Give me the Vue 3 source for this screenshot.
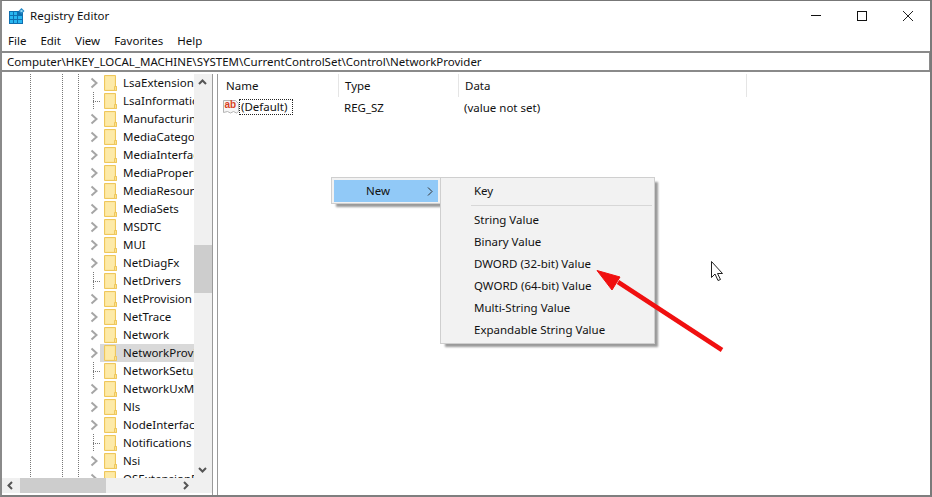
<script setup>
const items = [
  ['LsaExtensionConfig', 1], ['LsaInformation', 0], ['Manufacturing', 1], ['MediaCategories', 1],
  ['MediaInterfaces', 1], ['MediaProperties', 1], ['MediaResources', 1], ['MediaSets', 1],
  ['MSDTC', 1], ['MUI', 1], ['NetDiagFx', 1], ['NetDrivers', 0], ['NetProvision', 1],
  ['NetTrace', 1], ['Network', 1], ['NetworkProvider', 1], ['NetworkSetup', 0],
  ['NetworkUxManager', 1], ['Nls', 1], ['NodeInterfaces', 1], ['Notifications', 0],
  ['Nsi', 1], ['OSExtensionDatabase', 1]
]
const menuItems = ['File', 'Edit', 'View', 'Favorites', 'Help']
const groupTwo = ['String Value', 'Binary Value', 'DWORD (32-bit) Value', 'QWORD (64-bit) Value', 'Multi-String Value', 'Expandable String Value']
</script>

<template>
  <div class="window">
    <header class="titlebar">
      <svg class="appicon" width="16" height="16" viewBox="0 0 16 16">
        <rect x="0" y="3" width="14" height="13" fill="#0f6fb0" />
        <g fill="#29b6f0">
          <rect x="1" y="4" width="3" height="3" /><rect x="5" y="4" width="3" height="3" />
          <rect x="1" y="8" width="3" height="3" /><rect x="5" y="8" width="3" height="3" /><rect x="9" y="8" width="4" height="3" />
          <rect x="1" y="12" width="3" height="3" /><rect x="5" y="12" width="3" height="3" /><rect x="9" y="12" width="4" height="3" />
        </g>
        <path d="M12.500 0l3 3-3 3-3-3z" fill="#2a8cc8" />
        <rect x="11.500" y="2" width="2" height="2" fill="#8fd6f5" />
      </svg>
      <span class="title">Registry Editor</span>
      <div class="winbtns">
        <svg width="12" height="12" viewBox="0 0 12 12"><path d="M1 5.500h10" stroke="#111" fill="none" /></svg>
        <svg width="12" height="12" viewBox="0 0 12 12"><rect x="1.500" y="1.500" width="9" height="9" stroke="#111" fill="none" /></svg>
        <svg width="12" height="12" viewBox="0 0 12 12"><path d="M1 1l10 10M11 1L1 11" stroke="#222" fill="none" /></svg>
      </div>
    </header>
    <nav class="menubar">
      <span v-for="m in menuItems" :key="m">{{ m }}</span>
    </nav>
    <div class="address">Computer\HKEY_LOCAL_MACHINE\SYSTEM\CurrentControlSet\Control\NetworkProvider</div>
    <main class="body">
      <section class="treepane">
        <div class="treetop">
          <div class="tree">
            <div v-for="(it, i) in items" :key="it[0]" class="row" :class="{ sel: it[0] === 'NetworkProvider' }">
              <span class="exp">
                <svg v-if="it[1]" width="9" height="12" viewBox="0 0 9 12"><path d="M1.500 1.500L6.500 6l-5 4.500" fill="none" stroke="#a6a6a6" stroke-width="2" /></svg>
                <span v-else class="leaf"></span>
              </span>
              <svg class="folder" width="13" height="16" viewBox="0 0 13 16">
                <path d="M.5.5h11v11h1v4H.5z" fill="#fde28f" stroke="#eec75c" />
                <path d="M1.500 1.500h9v13h-9z" fill="#fdeaa8" />
                <path d="M10.500 11.500h2v4h-2z" fill="#fde28f" stroke="#eec75c" />
              </svg>
              <span class="name">{{ it[0] }}</span>
            </div>
          </div>
          <div class="vscroll">
            <svg width="18" height="16" viewBox="0 0 18 16"><path d="M5 10l3.500-3.500L12 10" fill="none" stroke="#555" stroke-width="2" /></svg>
            <div class="vtrack"><div class="vthumb"></div></div>
            <svg width="18" height="16" viewBox="0 0 18 16"><path d="M5 6l3.500 3.500L12 6" fill="none" stroke="#555" stroke-width="2" /></svg>
          </div>
        </div>
        <div class="hscroll">
          <svg width="17" height="15" viewBox="0 0 17 15"><path d="M10 4L6.500 7.500 10 11" fill="none" stroke="#555" stroke-width="2" /></svg>
          <div class="hthumb"></div>
          <svg class="hright" width="17" height="15" viewBox="0 0 17 15"><path d="M7 4l3.500 3.500L7 11" fill="none" stroke="#555" stroke-width="2" /></svg>
        </div>
      </section>
      <section class="list">
        <div class="lhead">
          <span class="c1">Name</span><span class="c2">Type</span><span class="c3">Data</span>
        </div>
        <div class="lrow">
          <svg class="regicon" width="16" height="16" viewBox="0 0 16 16">
            <path d="M.5 1.500h12l3 3v8l-2 1.500-3-1.500-3 1.500-3-1.500-4 1z" fill="#f6f6f6" stroke="#b5b5b5" />
            <text x="1.500" y="9" class="ab">ab</text>
          </svg>
          <span class="default">(Default)</span>
          <span class="t2">REG_SZ</span>
          <span class="t3">(value not set)</span>
        </div>
      </section>
    </main>

    <div class="ctx">
      <div class="ctxitem"><span class="newlabel">New</span><svg width="6" height="9" viewBox="0 0 6 9"><path d="M1 .5l4 4-4 4" fill="none" stroke="#333" /></svg></div>
    </div>
    <div class="sub">
      <div class="subitem">Key</div>
      <div class="sep"></div>
      <div v-for="g in groupTwo" :key="g" class="subitem">{{ g }}</div>
    </div>

    <svg class="arrow" width="932" height="497" viewBox="0 0 932 497">
      <path d="M722 350L618 282" stroke="#f01010" stroke-width="4.500" fill="none" />
      <path d="M597 270.500L620 277 612 290z" fill="#f01010" stroke="#f01010" />
      <path d="M711.500 261.500v16l3.500-3.500 3 6.500 2.500-1-3-6h5z" fill="#fff" stroke="#222" />
    </svg>
  </div>
</template>

<style scoped>
.window {
  position: relative;
  width: 932px;
  height: 497px;
  box-sizing: border-box;
  background: #fff;
  border-left: 2px solid #8a8a8a;
  border-right: 2px solid #7a7a7a;
  border-top: 1px solid #777;
  border-bottom: 2px solid #7f7f7f;
  font-family: "Noto Sans", "Open Sans", sans-serif;
  font-size: 11.5px;
  color: #111;
  overflow: hidden;
  display: flex;
  flex-direction: column;
}
.window::before {
  content: "";
  position: absolute;
  top: -1px;
  left: 859px;
  right: -2px;
  height: 1px;
  background: #1f3d35;
}
.titlebar {
  height: 30px;
  display: flex;
  align-items: center;
  padding-left: 7px;
  flex: none;
}
.appicon { margin-right: 5px; }
.title { padding-bottom: 2px; }
.winbtns {
  margin-left: auto;
  display: flex;
  gap: 34px;
  padding-right: 16px;
}
.menubar {
  height: 20px;
  display: flex;
  align-items: center;
  gap: 14px;
  padding-left: 6px;
  padding-bottom: 2px;
  box-sizing: border-box;
  flex: none;
}
.address {
  height: 21px;
  box-sizing: border-box;
  border: 1px solid #8a8a8a;
  border-width: 2px 1px 2px 0;
  line-height: 17px;
  padding-left: 5px;
  flex: none;
  white-space: nowrap;
}
.body {
  flex: 1;
  display: flex;
  min-height: 0;
  padding-top: 2px;
}
.treepane {
  width: 210px;
  flex: none;
  display: flex;
  flex-direction: column;
  border-right: 1px solid #9a9a9a;
}
.treetop {
  flex: 1;
  display: flex;
  min-height: 0;
}
.tree {
  width: 192px;
  flex: none;
  overflow: hidden;
  background-image:
    linear-gradient(#777 50%, transparent 50%),
    linear-gradient(#777 50%, transparent 50%),
    linear-gradient(#777 50%, transparent 50%);
  background-size: 1px 2px;
  background-position: 28px 0, 60px 0, 76px 0;
  background-repeat: repeat-y;
}
.row {
  height: 18px;
  display: flex;
  align-items: center;
  white-space: nowrap;
}
.row.sel {
  background: linear-gradient(#d9d9d9, #d9d9d9) no-repeat 98px 0 / 94px 100%;
}
.exp {
  width: 102px;
  height: 18px;
  flex: none;
  display: flex;
  align-items: center;
  justify-content: flex-end;
  padding-right: 5px;
  box-sizing: border-box;
}
.leaf {
  width: 8px;
  height: 18px;
  box-sizing: border-box;
  margin-right: -2px;
  background-image:
    linear-gradient(#777 50%, transparent 50%),
    linear-gradient(90deg, #777 50%, transparent 50%);
  background-size: 1px 2px, 2px 1px;
  background-position: 0 0, 0 9px;
  background-repeat: repeat-y, repeat-x;
}
.folder { flex: none; }
.name { margin-left: 6px; padding-bottom: 2px; }
.vscroll {
  width: 18px;
  flex: none;
  background: #f0f0f0;
  display: flex;
  flex-direction: column;
}
.vscroll svg { flex: none; }
.vtrack {
  flex: 1;
  padding-top: 155px;
}
.vthumb {
  height: 48px;
  background: #cdcdcd;
}
.hscroll {
  height: 15px;
  flex: none;
  background: #f0f0f0;
  display: flex;
  align-items: center;
  margin-bottom: 2px;
}
.hthumb {
  width: 86px;
  height: 15px;
  margin-left: 1px;
  background: #cdcdcd;
}
.hright { margin-left: auto; margin-right: 18px; }
.list {
  flex: 1;
  margin-left: 4px;
  border-left: 1px solid #9a9a9a;
  padding-left: 1px;
}
.lhead {
  height: 23px;
  display: flex;
  align-items: center;
  padding-left: 7px;
}
.lhead span {
  display: block;
  height: 23px;
  line-height: 23px;
  border-right: 1px solid #e5e5e5;
}
.c1 { width: 112px; }
.c2 { width: 113px; padding-left: 6px; }
.c3 { width: 281px; padding-left: 6px; }
.lrow {
  height: 18px;
  margin-top: 1px;
  display: flex;
  align-items: center;
  padding-left: 4px;
}
.regicon { flex: none; }
.ab {
  font-family: "Liberation Sans", sans-serif;
  font-size: 10px;
  font-weight: 700;
  fill: #d9431e;
}
.default {
  border: 1px dotted #222;
  padding: 0 1px;
  line-height: 14px;
  width: 54px;
  box-sizing: border-box;
}
.t2 { margin-left: 51px; width: 120px; }
.ctx {
  position: absolute;
  left: 329px;
  top: 176px;
  width: 110px;
  height: 27px;
  box-sizing: border-box;
  background: #f2f2f2;
  border: 1px solid #cfcfcf;
  padding: 2px;
  box-shadow: 4px 4px 2px -1px #9a9a9a;
}
.ctxitem {
  height: 22px;
  background: #91c9f7;
  display: flex;
  align-items: center;
  padding-left: 32px;
  gap: 37px;
}
.newlabel { padding-bottom: 2px; }
.sub {
  position: absolute;
  left: 438px;
  top: 176px;
  width: 215px;
  height: 167px;
  box-sizing: border-box;
  background: #f2f2f2;
  border: 1px solid #cfcfcf;
  box-shadow: 4px 4px 2px -1px #9a9a9a;
  padding-top: 2px;
}
.subitem {
  height: 22px;
  line-height: 22px;
  padding-left: 33px;
}
.sep {
  height: 1px;
  background: #d7d7d7;
  margin: 3px 2px 3px 30px;
}
.arrow {
  position: absolute;
  left: -2px;
  top: -1px;
  pointer-events: none;
}
</style>
